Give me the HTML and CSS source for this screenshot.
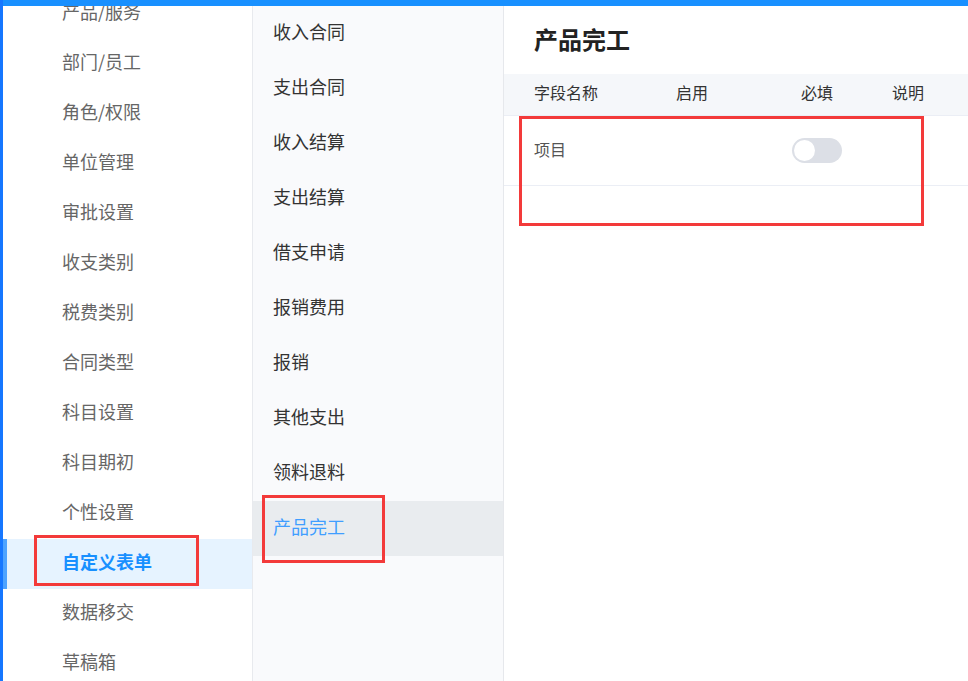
FILE: index.html
```html
<!DOCTYPE html>
<html lang="zh-CN">
<head>
<meta charset="utf-8">
<title>自定义表单</title>
<link rel="stylesheet" href="styles.css">
</head>
<body>
<div class="app">
  <div class="topbar"></div>
  <div class="main">
    <nav class="side">
      <ul class="side-list">
        <li class="side-item">产品/服务</li>
        <li class="side-item">部门/员工</li>
        <li class="side-item">角色/权限</li>
        <li class="side-item">单位管理</li>
        <li class="side-item">审批设置</li>
        <li class="side-item">收支类别</li>
        <li class="side-item">税费类别</li>
        <li class="side-item">合同类型</li>
        <li class="side-item">科目设置</li>
        <li class="side-item">科目期初</li>
        <li class="side-item">个性设置</li>
        <li class="side-item active">自定义表单<span class="mark mark-side"></span></li>
        <li class="side-item">数据移交</li>
        <li class="side-item">草稿箱</li>
      </ul>
    </nav>
    <nav class="sub">
      <ul class="sub-list">
        <li class="sub-item">收入合同</li>
        <li class="sub-item">支出合同</li>
        <li class="sub-item">收入结算</li>
        <li class="sub-item">支出结算</li>
        <li class="sub-item">借支申请</li>
        <li class="sub-item">报销费用</li>
        <li class="sub-item">报销</li>
        <li class="sub-item">其他支出</li>
        <li class="sub-item">领料退料</li>
        <li class="sub-item active">产品完工<span class="mark mark-sub"></span></li>
      </ul>
    </nav>
    <section class="content">
      <h1 class="title">产品完工</h1>
      <div class="table">
        <div class="thead">
          <div class="cell c1">字段名称</div>
          <div class="cell c2">启用</div>
          <div class="cell c3">必填</div>
          <div class="cell c4">说明</div>
        </div>
        <div class="trow">
          <div class="cell c1 name">项目</div>
          <div class="cell c2"></div>
          <div class="cell c3"><span class="switch"><span class="knob"></span></span></div>
          <div class="cell c4"></div>
          <span class="mark mark-row"></span>
        </div>
      </div>
    </section>
  </div>
</div>
</body>
</html>
```
FILE: styles.css
```css
* { box-sizing: border-box; }
html, body { margin: 0; padding: 0; }
body {
  width: 968px;
  height: 681px;
  overflow: hidden;
  font-family: "Microsoft YaHei", "Noto Sans CJK SC", "Liberation Sans", sans-serif;
  background: #fff;
}
.app {
  height: 681px;
  display: flex;
  flex-direction: column;
  border-left: 3px solid #1677ff;
}
.topbar {
  height: 6px;
  flex: none;
  background: #1890ff;
  position: relative;
  z-index: 2;
}
.main {
  flex: 1;
  display: flex;
  min-height: 0;
  overflow: hidden;
}
ul { list-style: none; margin: 0; padding: 0; }

/* left menu */
.side {
  width: 250px;
  flex: none;
  background: #fff;
  border-right: 1px solid #e8eaee;
}
.side-list { margin-top: -17px; }
.side-item {
  position: relative;
  height: 50px;
  line-height: 45px;
  padding: 0 0 5px 59px;
  font-size: 18px;
  color: #666;
}
.side-item.active {
  background: #e6f3ff;
  color: #1890ff;
  font-weight: bold;
  box-shadow: inset 4px 0 0 #4da3ff;
}

/* sub menu */
.sub {
  width: 251px;
  flex: none;
  background: #f9fafc;
  border-right: 1px solid #e6e8ec;
}
.sub-item {
  position: relative;
  height: 55px;
  line-height: 51px;
  padding: 0 0 4px 20px;
  font-size: 18px;
  color: #333;
}
.sub-item.active {
  background: #e9ecef;
  color: #409eff;
}

/* content */
.content {
  flex: 1;
  background: #fff;
}
.title {
  margin: 0;
  height: 68px;
  padding: 0 0 0 30px;
  line-height: 66px;
  font-size: 24px;
  font-weight: bold;
  color: #222;
}
.thead, .trow {
  display: grid;
  grid-template-columns: 138px 100px 150px 32px 1fr;
  align-items: center;
}
.thead {
  height: 42px;
  padding-bottom: 5px;
  background: #f5f7fa;
  border-bottom: 1px solid #ebeef5;
  font-size: 16px;
  color: #333;
}
.trow {
  position: relative;
  height: 70px;
  border-bottom: 1px solid #ebeef5;
  font-size: 16px;
  color: #555;
}
.cell { white-space: nowrap; }
.c1 { padding-left: 30px; }
.c2, .c3, .c4 { text-align: center; }
.c3 { display: flex; justify-content: center; }
.name { padding-bottom: 4px; }

.switch {
  position: relative;
  display: block;
  width: 50px;
  height: 25px;
  border-radius: 13px;
  background: #dcdfe6;
}
.knob {
  position: absolute;
  left: 2px;
  top: 2px;
  width: 21px;
  height: 21px;
  border-radius: 50%;
  background: #fff;
}

/* red annotation boxes */
.mark {
  position: absolute;
  border: 3px solid #f33a3a;
  pointer-events: none;
}
.mark-side { left: 31px; top: -4px; width: 165px; height: 51px; }
.mark-sub { left: 9px; top: -6px; width: 123px; height: 68px; }
.mark-row { left: 15px; top: 0; width: 405px; height: 110px; }
```
